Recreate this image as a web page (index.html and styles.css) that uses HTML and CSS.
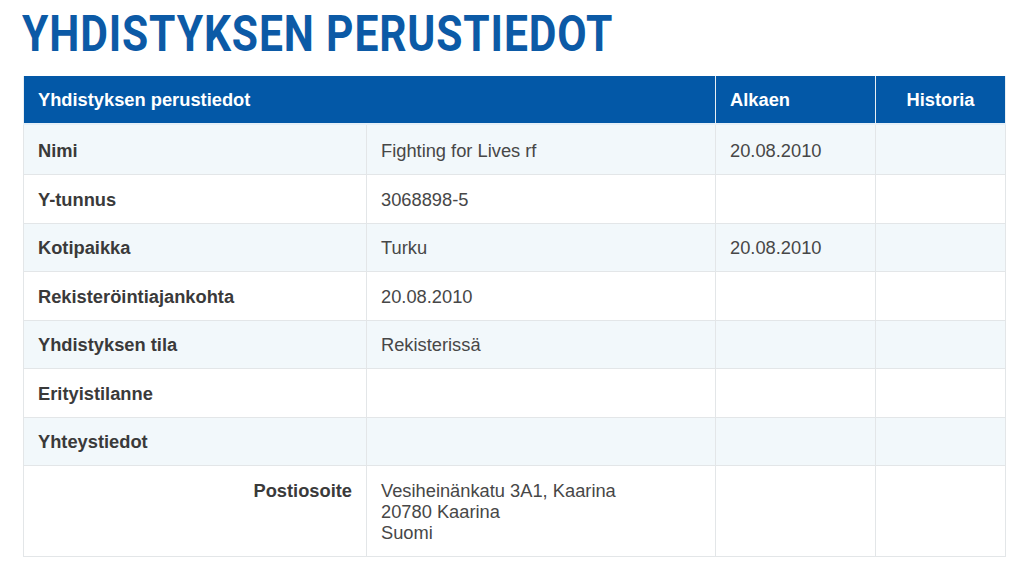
FILE: index.html
```html
<!DOCTYPE html>
<html lang="fi">
<head>
<meta charset="utf-8">
<title>Yhdistyksen perustiedot</title>
<link rel="stylesheet" href="styles.css">
</head>
<body>
<main class="page">
  <h1 class="title">YHDISTYKSEN PERUSTIEDOT</h1>
  <table class="info">
    <colgroup>
      <col class="c1"><col class="c2"><col class="c3"><col class="c4">
    </colgroup>
    <thead>
      <tr>
        <th colspan="2">Yhdistyksen perustiedot</th>
        <th>Alkaen</th>
        <th class="center">Historia</th>
      </tr>
    </thead>
    <tbody>
      <tr class="alt"><th>Nimi</th><td>Fighting for Lives rf</td><td>20.08.2010</td><td></td></tr>
      <tr><th>Y-tunnus</th><td>3068898-5</td><td></td><td></td></tr>
      <tr class="alt"><th>Kotipaikka</th><td>Turku</td><td>20.08.2010</td><td></td></tr>
      <tr><th>Rekisteröintiajankohta</th><td>20.08.2010</td><td></td><td></td></tr>
      <tr class="alt"><th>Yhdistyksen tila</th><td>Rekisterissä</td><td></td><td></td></tr>
      <tr><th>Erityistilanne</th><td></td><td></td><td></td></tr>
      <tr class="alt"><th>Yhteystiedot</th><td></td><td></td><td></td></tr>
      <tr><th class="right">Postiosoite</th><td>Vesiheinänkatu 3A1, Kaarina<br>20780 Kaarina<br>Suomi</td><td></td><td></td></tr>
    </tbody>
  </table>
</main>
</body>
</html>
```
FILE: styles.css
```css
html, body {
  margin: 0;
  padding: 0;
  background: #ffffff;
}
.page {
  padding: 8px 19px 0 23px;
  font-family: "Liberation Sans", Arial, sans-serif;
  color: #3d3d3d;
}
.title {
  margin: 0 0 16px -1px;
  font-family: "Roboto", "Liberation Sans", sans-serif;
  font-weight: bold;
  font-size: 50px;
  line-height: 52px;
  color: #0c5aa6;
  letter-spacing: 1px;
  transform: scaleX(0.852);
  transform-origin: left center;
  white-space: nowrap;
}
.info {
  width: 982px;
  border-collapse: collapse;
  table-layout: fixed;
  font-size: 18.3px;
  line-height: 21px;
}
.c1 { width: 343px; }
.c2 { width: 349px; }
.c3 { width: 160px; }
.c4 { width: 130px; }
.info thead th {
  background: #0358a7;
  color: #ffffff;
  font-weight: bold;
  text-align: left;
  padding: 13px 14px 13px;
  border: 1px solid #e8eef3;
  border-top: none;
}
.info thead th.center { text-align: center; }
.info tbody th,
.info tbody td {
  border: 1px solid #e3e6e8;
  padding: 13.5px 14px 13px;
  vertical-align: top;
  text-align: left;
}
.info tbody tr:first-child th,
.info tbody tr:first-child td {
  padding-top: 15px;
  border-top: 2px solid #e6f0f8;
}
.info tbody th {
  font-weight: bold;
  color: #3a3a3a;
}
.info tbody td {
  font-weight: normal;
  color: #474747;
}
.info tbody th.right { text-align: right; }
.info tbody tr.alt { background: #f2f8fb; }
```
